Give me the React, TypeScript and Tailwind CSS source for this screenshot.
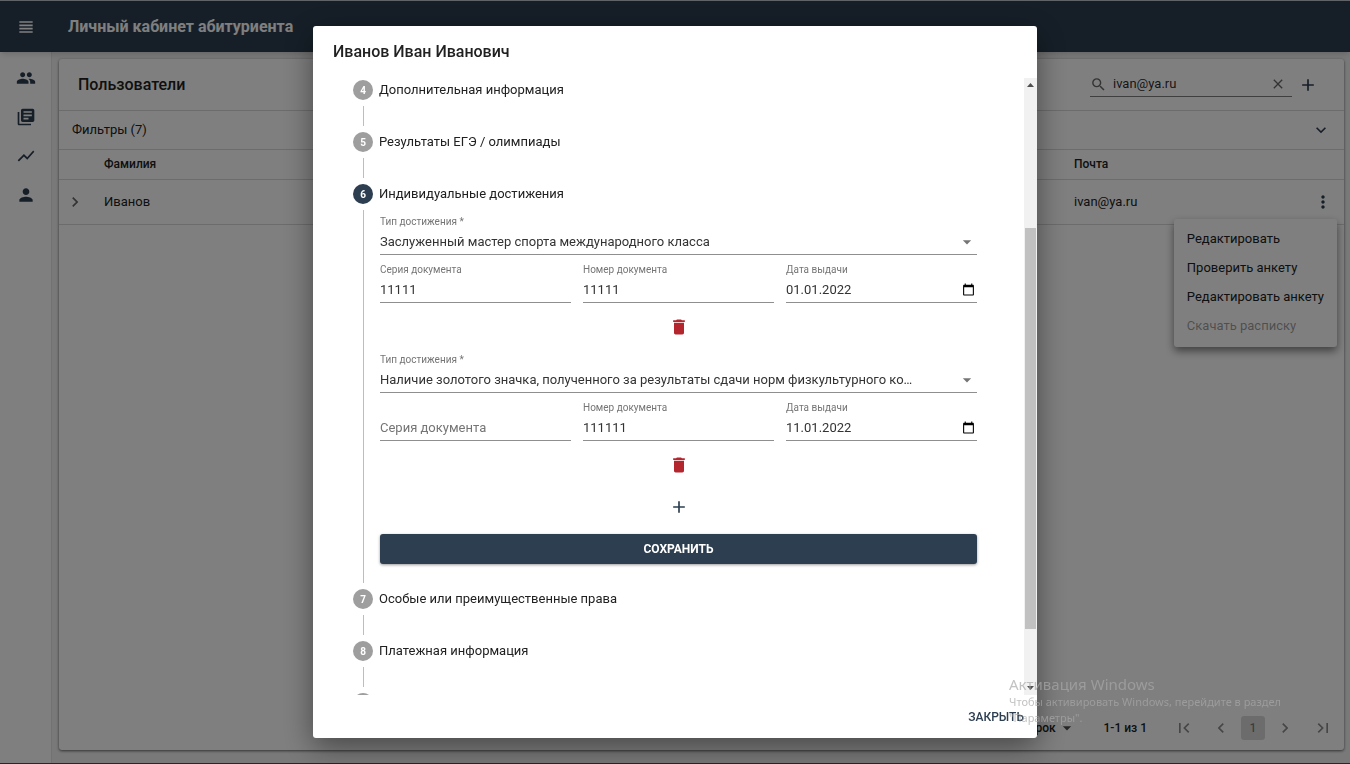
import React, { useState } from 'react';
import {
  MdAdd,
  MdArrowDropDown,
  MdCalendarToday,
  MdChevronLeft,
  MdChevronRight,
  MdClear,
  MdDelete,
  MdExpandMore,
  MdFirstPage,
  MdLastPage,
  MdLibraryBooks,
  MdMoreVert,
  MdPeople,
  MdPerson,
  MdSearch,
  MdShowChart,
  MdViewHeadline,
} from 'react-icons/md';

type Achievement = {
  id: number;
  type: string;
  series: string;
  number: string;
  date: string;
};

const initialAchievements: Achievement[] = [
  { id: 1, type: 'Заслуженный мастер спорта международного класса', series: '11111', number: '11111', date: '01.01.2022' },
  {
    id: 2,
    type: 'Наличие золотого значка, полученного за результаты сдачи норм физкультурного ко…',
    series: '',
    number: '111111',
    date: '11.01.2022',
  },
];

const Header = () => (
  <header className="relative z-10 flex h-[52px] shrink-0 items-center bg-[#2c3e50] pt-[2px] text-white shadow-md">
    <button type="button" aria-label="Меню" className="flex w-[52px] justify-center">
      <MdViewHeadline size={20} />
    </button>
    <h1 className="ml-4 text-base font-bold">Личный кабинет абитуриента</h1>
  </header>
);

const Sidebar = () => (
  <nav className="flex w-[52px] shrink-0 flex-col items-center gap-[19px] border-r border-black/10 bg-white pt-4 text-[#2c3e50]">
    <a href="#users" aria-label="Пользователи"><MdPeople size={20} /></a>
    <a href="#lists" aria-label="Списки"><MdLibraryBooks size={20} /></a>
    <a href="#stats" aria-label="Статистика"><MdShowChart size={20} /></a>
    <a href="#profile" aria-label="Профиль"><MdPerson size={20} /></a>
  </nav>
);

const RowMenu = () => (
  <div className="absolute top-[39px] right-[7px] z-10 flex flex-col rounded-[3px] bg-white py-[6px] text-[13px] whitespace-nowrap shadow-[0_4px_8px_rgba(0,0,0,0.5)]">
    <button type="button" className="h-[29px] px-[13px] text-left">Редактировать</button>
    <button type="button" className="h-[29px] px-[13px] text-left">Проверить анкету</button>
    <button type="button" className="h-[29px] px-[13px] text-left">Редактировать анкету</button>
    <button type="button" disabled className="h-[29px] px-[13px] text-left text-black/40">Скачать расписку</button>
  </div>
);

const Pagination = () => (
  <footer className="mt-auto flex h-11 items-center justify-end pr-[11px] text-xs font-medium">
    <div className="relative flex items-center">
      <select aria-label="Строк на странице" className="appearance-none bg-transparent pr-5">
        <option>5 строк</option>
      </select>
      <MdArrowDropDown size={20} className="pointer-events-none absolute right-0 text-black/70" />
    </div>
    <span className="mx-[27px]">1-1 из 1</span>
    <div className="flex items-center text-black/45">
      <button type="button" disabled aria-label="Первая"><MdFirstPage size={20} /></button>
      <button type="button" disabled aria-label="Назад" className="ml-[17px]"><MdChevronLeft size={20} /></button>
      <button type="button" className="mx-[10px] size-6 rounded-[3px] bg-black/15">1</button>
      <button type="button" disabled aria-label="Вперёд"><MdChevronRight size={20} /></button>
      <button type="button" disabled aria-label="Последняя" className="ml-[18px]"><MdLastPage size={20} /></button>
    </div>
  </footer>
);

const UsersCard = () => {
  const [search, setSearch] = useState('ivan@ya.ru');

  return (
    <section className="flex flex-1 flex-col rounded-[3px] bg-white shadow-[0_1px_3px_rgba(0,0,0,0.6)]">
      <div className="flex h-[52px] items-center border-b border-black/15 pr-[26px] pl-[19px]">
        <h2 className="text-base font-medium">Пользователи</h2>
        <div className="ml-auto flex h-[25px] w-[202px] items-center border-b border-black/50 text-black/60">
          <MdSearch size={17} className="shrink-0" />
          <input
            aria-label="Поиск"
            className="ml-[6px] min-w-0 flex-1 bg-transparent text-[13px] text-black/85 outline-none"
            value={search}
            onChange={(e) => setSearch(e.target.value)}
          />
          <button type="button" aria-label="Очистить" className="mr-[6px]" onClick={() => setSearch('')}>
            <MdClear size={16} />
          </button>
        </div>
        <button type="button" aria-label="Добавить" className="ml-[6px] text-[#2c3e50]">
          <MdAdd size={20} />
        </button>
      </div>
      <button type="button" className="flex h-[39px] items-center justify-between border-b border-black/15 px-[13px] text-[13px]">
        Фильтры (7)
        <MdExpandMore size={20} className="text-[#2c3e50]" />
      </button>
      <table className="w-full table-fixed text-left text-[13px]">
        <thead>
          <tr className="h-[29px] border-b border-black/15 text-xs">
            <th className="w-[45px]"></th>
            <th className="font-medium">Фамилия</th>
            <th className="w-[270px] font-medium">Почта</th>
          </tr>
        </thead>
        <tbody>
          <tr className="h-[45px] border-b border-black/15">
            <td className="pl-[6px]">
              <button type="button" aria-label="Развернуть" className="block text-black/60"><MdChevronRight size={20} /></button>
            </td>
            <td>Иванов</td>
            <td className="relative pr-[11px]">
              <div className="flex items-center justify-between">
                ivan@ya.ru
                <button type="button" aria-label="Действия" className="text-[#2c3e50]"><MdMoreVert size={20} /></button>
              </div>
              <RowMenu />
            </td>
          </tr>
        </tbody>
      </table>
      <Pagination />
    </section>
  );
};

const StepLabel = ({ index, title, active = false }: { index: number; title: string; active?: boolean }) => (
  <div className="flex h-5 items-center gap-[6px] text-[13px]">
    <span
      className={`flex size-5 shrink-0 items-center justify-center rounded-full text-[10px] font-bold text-white ${
        active ? 'bg-[#2c3e50]' : 'bg-[#9e9e9e]'
      }`}
    >
      {index}
    </span>
    {title}
  </div>
);

const Connector = () => <div className="my-[6px] ml-[10px] h-5 border-l border-[#bdbdbd]" />;

const TextField = ({
  id,
  label,
  value,
  onChange,
  date = false,
}: {
  id: string;
  label: string;
  value: string;
  onChange: (value: string) => void;
  date?: boolean;
}) => (
  <div className="flex flex-col">
    <label htmlFor={id} className={`h-4 text-[10px] leading-[18px] text-[#757575] ${value ? '' : 'invisible'}`}>
      {label}
    </label>
    <div className="relative flex items-center border-b border-[#8f8f8f]">
      <input
        id={id}
        className="h-[25px] w-full bg-transparent text-[13px] text-[#333] outline-none placeholder:text-[#757575]"
        placeholder={label}
        value={value}
        onChange={(e) => onChange(e.target.value)}
      />
      {date && (
        <button type="button" aria-label="Открыть календарь" className="absolute right-[2px] text-black">
          <MdCalendarToday size={13} />
        </button>
      )}
    </div>
  </div>
);

const AchievementFields = ({
  item,
  onChange,
  onDelete,
}: {
  item: Achievement;
  onChange: (patch: Partial<Achievement>) => void;
  onDelete: () => void;
}) => (
  <div>
    <label htmlFor={`type-${item.id}`} className="block h-4 text-[10px] leading-[18px] text-[#757575]">
      Тип достижения *
    </label>
    <div className="relative flex items-center border-b border-[#8f8f8f]">
      <select id={`type-${item.id}`} className="h-[25px] w-full appearance-none bg-transparent pr-5 text-[13px] text-[#333] outline-none">
        <option>{item.type}</option>
      </select>
      <MdArrowDropDown size={20} className="pointer-events-none absolute right-0 text-[#757575]" />
    </div>
    <div className="mt-[6px] grid grid-cols-3 gap-3">
      <TextField id={`series-${item.id}`} label="Серия документа" value={item.series} onChange={(series) => onChange({ series })} />
      <TextField id={`number-${item.id}`} label="Номер документа" value={item.number} onChange={(number) => onChange({ number })} />
      <TextField id={`date-${item.id}`} label="Дата выдачи" value={item.date} onChange={(date) => onChange({ date })} date />
    </div>
    <div className="flex h-12 items-center justify-center">
      <button type="button" aria-label="Удалить" className="text-[#b3262d]" onClick={onDelete}>
        <MdDelete size={20} />
      </button>
    </div>
  </div>
);

const Scrollbar = () => (
  <div className="flex w-[13px] shrink-0 flex-col bg-[#f1f1f1] px-px">
    <svg viewBox="0 0 11 13" className="h-[13px] fill-[#505050]"><path d="M2 9h7L5.5 5z" /></svg>
    <div className="flex-[137]" />
    <div className="flex-[401] bg-[#c1c1c1]" />
    <div className="flex-[53]" />
    <svg viewBox="0 0 11 13" className="h-[13px] fill-[#505050]"><path d="M2 4h7L5.5 8z" /></svg>
  </div>
);

const QuestionnaireDialog = () => {
  const [achievements, setAchievements] = useState(initialAchievements);

  const updateAchievement = (id: number, patch: Partial<Achievement>) => {
    setAchievements(achievements.map((a) => (a.id === id ? { ...a, ...patch } : a)));
  };

  const addAchievement = () => {
    setAchievements([...achievements, { id: Date.now(), type: '', series: '', number: '', date: '' }]);
  };

  return (
    <div
      role="dialog"
      aria-labelledby="dialog-title"
      className="flex h-full w-full max-w-[724px] flex-col rounded-[3px] bg-white shadow-[0_9px_30px_rgba(0,0,0,0.45)]"
    >
      <h2 id="dialog-title" className="flex h-[52px] shrink-0 items-center px-5 text-base font-medium">
        Иванов Иван Иванович
      </h2>
      <div className="flex min-h-0 flex-1">
        <div className="flex-1 overflow-hidden pt-[2px] pr-[47px] pl-10">
          <StepLabel index={4} title="Дополнительная информация" />
          <Connector />
          <StepLabel index={5} title="Результаты ЕГЭ / олимпиады" />
          <Connector />
          <StepLabel index={6} title="Индивидуальные достижения" active />
          <div className="my-[6px] ml-[10px] border-l border-[#bdbdbd] pt-[3px] pb-[19px] pl-4">
            {achievements.map((item) => (
              <AchievementFields
                key={item.id}
                item={item}
                onChange={(patch) => updateAchievement(item.id, patch)}
                onDelete={() => setAchievements(achievements.filter((a) => a.id !== item.id))}
              />
            ))}
            <div className="flex h-9 items-center justify-center">
              <button type="button" aria-label="Добавить достижение" className="text-[#2c3e50]" onClick={addAchievement}>
                <MdAdd size={20} />
              </button>
            </div>
            <button
              type="button"
              className="mt-[9px] h-[30px] w-full rounded-[3px] bg-[#2c3e50] text-xs font-bold text-white uppercase shadow-[0_1px_3px_rgba(0,0,0,0.4)]"
            >
              Сохранить
            </button>
          </div>
          <StepLabel index={7} title="Особые или преимущественные права" />
          <Connector />
          <StepLabel index={8} title="Платежная информация" />
          <Connector />
          <StepLabel index={9} title="" />
        </div>
        <Scrollbar />
      </div>
      <div className="flex h-[43px] shrink-0 items-center justify-end pr-[13px]">
        <button type="button" className="text-xs font-medium text-[#2c3e50] uppercase">Закрыть</button>
      </div>
    </div>
  );
};

const ActivationNotice = () => (
  <div className="pointer-events-none fixed right-[41px] bottom-[38px] z-30 w-[300px] font-['Noto_Sans',sans-serif] text-[#a8a8a8]/70">
    <p className="text-[15px] leading-5">Активация Windows</p>
    <p className="text-[11px] leading-4">Чтобы активировать Windows, перейдите в раздел<br />"Параметры".</p>
  </div>
);

const App = () => {
  return (
    <div className="flex h-screen flex-col bg-[#f3f3f3] font-[Roboto,sans-serif] text-[#212121]">
      <Header />
      <div className="flex min-h-0 flex-1">
        <Sidebar />
        <main className="flex min-w-0 flex-1 pt-[7px] pr-[6px] pb-[14px] pl-[7px]">
          <UsersCard />
        </main>
      </div>
      <div className="fixed inset-0 z-20 flex justify-center border-t border-b border-t-[#606468] border-b-[#2a2528] bg-black/50 py-[25px]">
        <QuestionnaireDialog />
      </div>
      <ActivationNotice />
    </div>
  );
};

export default App;
